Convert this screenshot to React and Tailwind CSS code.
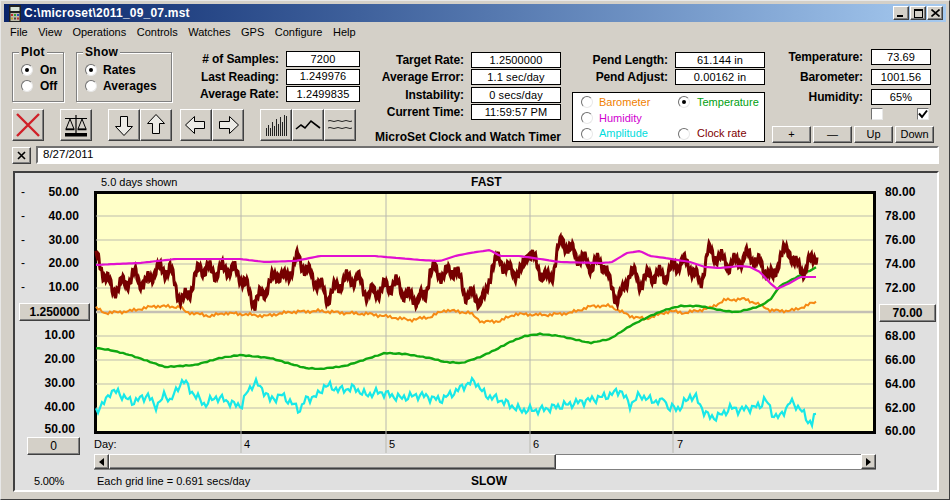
import React from "react";

const raised = "border border-t-white border-l-white border-r-[#404040] border-b-[#404040] shadow-[inset_-1px_-1px_0_#808080] bg-[#d4d0c8]";
const sunken = "border-2 border-t-[#707070] border-l-[#707070] border-r-white border-b-white";

const interp = (pts, x) => {
  for (let i = 1; i < pts.length; i++) {
    if (x <= pts[i][0]) {
      const [a, b] = pts[i - 1];
      const [c, d] = pts[i];
      return b + ((d - b) * (x - a)) / (c - a);
    }
  }
  return pts[pts.length - 1][1];
};

const series = (pts, fn, step = 1) => {
  const out = [];
  for (let x = 96; x <= 817; x += step) {
    out.push(`${x},${(interp(pts, x) + fn(x)).toFixed(1)}`);
  }
  return out.join(" ");
};

const brownPts = [[96,257],[105,275],[112,290],[125,283],[135,275],[145,285],[155,270],[170,270],[180,298],[183,302],[190,290],[200,267],[215,272],[228,268],[240,275],[255,303],[265,290],[278,272],[285,280],[298,258],[310,275],[320,285],[327,298],[343,280],[357,278],[368,295],[380,290],[395,283],[410,298],[425,298],[430,270],[445,275],[455,268],[465,293],[477,298],[485,300],[492,265],[500,260],[510,272],[522,272],[528,250],[540,270],[547,280],[552,275],[558,250],[563,240],[570,250],[580,258],[590,265],[600,262],[605,265],[610,285],[617,298],[622,295],[630,270],[640,283],[650,275],[665,275],[680,262],[690,265],[700,285],[708,252],[715,255],[730,265],[740,260],[750,255],[760,265],[768,272],[773,280],[780,255],[790,250],[795,265],[805,270],[815,255],[817,254]];
const orangePts = [[96,308],[105,313],[120,312],[130,311],[155,306],[180,307],[186,312],[210,316],[225,313],[240,314],[265,316],[290,312],[320,311],[345,313],[370,314],[410,320],[430,317],[445,310],[470,313],[482,322],[500,321],[515,314],[545,315],[570,313],[592,306],[610,306],[630,316],[645,319],[670,311],[685,313],[710,308],[725,300],[745,299],[760,305],[770,310],[780,311],[795,310],[810,304],[817,302]];
const magentaPts = [[96,265],[115,264],[140,263],[175,259],[205,259],[240,259],[265,262],[295,261],[320,256],[375,256],[420,260],[440,261],[455,256],[470,253],[490,250],[500,256],[520,256],[560,262],[600,263],[612,262],[627,253],[640,251],[650,256],[665,258],[690,262],[705,267],[720,268],[740,266],[750,267],[760,272],[770,283],[777,289],[790,283],[800,277],[817,277]];
const greenPts = [[96,348],[110,350],[130,355],[165,367],[195,365],[220,358],[240,355],[270,358],[305,368],[320,369],[345,366],[385,353],[405,354],[430,358],[445,362],[462,363],[480,357],[495,350],[510,342],[525,336],[540,334],[560,336],[590,343],[610,339],[630,326],[650,316],[665,310],[680,306],[700,306],[710,308],[725,311],[737,312],[750,309],[760,306],[770,300],[780,286],[797,277],[817,267]];
const cyanPts = [[96,410],[103,405],[110,392],[118,392],[125,398],[133,402],[142,398],[148,395],[155,407],[165,395],[170,400],[176,392],[183,379],[190,390],[200,400],[205,405],[215,397],[225,400],[235,405],[242,405],[247,392],[255,382],[265,392],[270,400],[282,395],[290,402],[300,410],[305,400],[318,395],[325,385],[340,390],[355,388],[365,395],[380,392],[400,398],[420,395],[440,400],[455,392],[465,385],[475,381],[485,395],[500,400],[520,410],[540,410],[565,405],[590,400],[610,395],[620,390],[630,405],[640,395],[650,400],[662,402],[664,397],[668,408],[680,408],[690,396],[696,398],[705,413],[710,417],[717,417],[725,412],[730,408],[740,410],[750,408],[760,406],[765,398],[773,415],[780,417],[790,402],[800,408],[807,420],[812,423],[814,416],[817,419]];

const Radio = ({ on }) => (
  <span className="w-[12px] h-[12px] rounded-full bg-white border border-t-[#707070] border-l-[#707070] border-r-[#e8e8e8] border-b-[#e8e8e8] flex items-center justify-center shrink-0">
    {on && <span className="w-[4px] h-[4px] rounded-full bg-black" />}
  </span>
);

const Val = ({ children, w = "w-[90px]" }) => (
  <div className={`${w} h-[16px] border border-black bg-white flex items-center justify-center text-[11px] tracking-[0.1px] leading-none`}>{children}</div>
);

const LabelRow = ({ label, value, h, labelW, boxW, gap = "gap-[7px]" }) => (
  <div className={`flex items-center justify-end ${gap} ${h}`}>
    <span className={`${labelW} text-right font-bold text-[12px] tracking-[-0.1px] whitespace-nowrap`}>{label}</span>
    <Val w={boxW}>{value}</Val>
  </div>
);

const Group = ({ title, w, children }) => (
  <div className={`relative ${w} h-[50px] border border-[#808080] shadow-[1px_1px_0_#fff,inset_1px_1px_0_#fff] pt-[9px] pl-[8px]`}>
    <span className="absolute -top-[8px] left-[6px] px-[2px] bg-[#d4d0c8] font-bold text-[12px] leading-[14px] tracking-[0.3px]">{title}</span>
    {children}
  </div>
);

const RadioLine = ({ on, children, gap = "gap-[6px]" }) => (
  <div className={`flex items-center ${gap} h-[16px] font-bold text-[12px]`}>
    <Radio on={on} />
    <span>{children}</span>
  </div>
);

const IconBtn = ({ children }) => (
  <div className={`w-[32px] h-[32px] ${raised} flex items-center justify-center`}>{children}</div>
);

const Arrow = ({ rot }) => (
  <svg width="24" height="24" viewBox="0 0 24 24" style={{ transform: `rotate(${rot}deg)` }}>
    <path d="M8.5 3.5h7v10h5l-8.500 9-8.500-9h5z" fill="#ecebe6" stroke="#000" strokeWidth="1" />
  </svg>
);

const TitleBtn = ({ children }) => (
  <div className={`w-[16px] h-[14px] ${raised} flex items-center justify-center`}>{children}</div>
);

const LeftNum = ({ dash, val, end }) => (
  <div className="h-[24px] flex items-center font-bold text-[12px] tracking-[0.1px]">
    <span className="w-[16px] text-center font-normal">{dash ? "-" : ""}</span>
    <span className={`${end} text-right`}>{val}</span>
  </div>
);

const AxisBtn = ({ w, ml, children }) => (
  <div className={`${w} ${ml} h-[18px] ${raised} flex items-center justify-center text-[12px] font-bold`}>{children}</div>
);

export default function App() {
  const gridY = [216, 240, 264, 288, 336, 360, 384, 408];
  const gridX = [241, 386, 530, 673];
  const brown = series(brownPts, (x) => 6 * Math.sin((x * 2 * Math.PI) / 12.5) + 4 * Math.sin((x * 2 * Math.PI) / 3.1), 0.5);
  const orange = series(orangePts, (x) => 1.1 * Math.sin(x * 1.3) + 0.7 * Math.sin(x * 0.37), 2);
  const magenta = series(magentaPts, () => 0, 3);
  const green = series(greenPts, (x) => 0.4 * Math.sin(x * 0.8), 3);
  const cyan = series(cyanPts, (x) => 3 * Math.sin(x * 1.1) + 2 * Math.sin(x * 0.53), 2);

  return (
    <div className="w-[950px] h-[500px] overflow-hidden bg-[#d4d0c8] text-black border border-t-[#e8e8e8] border-l-[#e8e8e8] border-r-[#404040] border-b-[#404040] px-[3px] pt-[3px] [font-family:'Liberation_Sans',Arial,sans-serif]">
      {/* Title bar */}
      <div className="h-[18px] flex items-center justify-between bg-gradient-to-r from-[#0a246a] to-[#a6caf0] pl-[5px] pr-[3px]">
        <div className="flex items-center gap-[3px]">
          <svg width="12" height="17" viewBox="0 0 12 17">
            <rect width="12" height="17" fill="#222" />
            <rect x="1.500" y="2" width="9" height="4" fill="#d8e4d8" />
            <rect x="1.500" y="8" width="9" height="8" fill="#bdb9a8" />
            <rect x="2" y="9" width="2" height="2" fill="#c03030" />
            <rect x="5" y="9" width="2" height="2" fill="#30a030" />
            <rect x="8" y="9" width="2" height="2" fill="#3050c0" />
            <rect x="2" y="12.500" width="2" height="2" fill="#c0a030" />
            <rect x="5" y="12.500" width="2" height="2" fill="#444" />
            <rect x="8" y="12.500" width="2" height="2" fill="#c03030" />
          </svg>
          <span className="text-white font-bold text-[12px] tracking-[0.22px] whitespace-nowrap">C:\microset\2011_09_07.mst</span>
        </div>
        <div className="flex items-center">
          <TitleBtn><span className="w-[6px] h-[2px] bg-black mt-[6px] -ml-[2px]" /></TitleBtn>
          <div className="ml-[1px]"><TitleBtn><span className="w-[9px] h-[9px] border border-black border-t-2" /></TitleBtn></div>
          <div className="ml-[1px]">
            <TitleBtn>
              <svg width="9" height="8" viewBox="0 0 9 8"><path d="M0.5 0.5L8.5 7.5M8.5 0.5L0.5 7.5" stroke="#000" strokeWidth="1.6" /></svg>
            </TitleBtn>
          </div>
        </div>
      </div>

      {/* Menu */}
      <div className="h-[20px] flex items-center gap-[10.5px] pl-[6px] text-[11px]">
        {["File", "View", "Operations", "Controls", "Watches", "GPS", "Configure", "Help"].map((m) => (
          <span key={m}>{m}</span>
        ))}
      </div>

      {/* Controls area */}
      <div className="h-[104px] flex items-start pl-[8px]">
        <div className="w-[348px] pt-[10px] shrink-0">
          <div className="h-[57px] flex items-start">
            <Group title="Plot" w="w-[52px]">
              <RadioLine on gap="gap-[7px]">On</RadioLine>
              <RadioLine gap="gap-[7px]">Off</RadioLine>
            </Group>
            <div className="ml-[12px]">
              <Group title="Show" w="w-[96px]">
                <RadioLine on>Rates</RadioLine>
                <RadioLine>Averages</RadioLine>
              </Group>
            </div>
            <div className="flex-1 flex flex-col items-end gap-[1px] -mt-[1px]">
              <LabelRow h="h-[16px]" label="# of Samples:" value="7200" labelW="w-[100px]" boxW="w-[74px]" />
              <LabelRow h="h-[17px]" label="Last Reading:" value="1.249976" labelW="w-[100px]" boxW="w-[74px]" />
              <LabelRow h="h-[16px]" label="Average Rate:" value="1.2499835" labelW="w-[100px]" boxW="w-[74px]" />
            </div>
          </div>
          <div className="flex items-start">
            <IconBtn>
              <svg width="26" height="26" viewBox="0 0 26 26"><path d="M2 2L24 24M24 2L2 24" stroke="#d02028" strokeWidth="2.4" /></svg>
            </IconBtn>
            <div className="ml-[16px]">
              <IconBtn>
                <svg width="26" height="26" viewBox="0 0 26 26">
                  <path d="M2 6.5H24M13 3V22" stroke="#000" strokeWidth="1.2" fill="none" />
                  <path d="M7 7L3 17H11ZM19 7L15 17H23Z" stroke="#000" strokeWidth="1" fill="none" />
                  <path d="M2.5 17.5H11.5M14.5 17.5H23.5" stroke="#000" strokeWidth="1.4" />
                  <rect x="2" y="21" width="22" height="3.5" fill="#000" />
                </svg>
              </IconBtn>
            </div>
            <div className="ml-[16px] flex">
              <IconBtn><Arrow rot={0} /></IconBtn>
              <IconBtn><Arrow rot={180} /></IconBtn>
            </div>
            <div className="ml-[8px] flex">
              <IconBtn><Arrow rot={90} /></IconBtn>
              <IconBtn><Arrow rot={-90} /></IconBtn>
            </div>
            <div className="ml-[16px] flex">
              <IconBtn>
                <svg width="26" height="24" viewBox="0 0 26 24" shapeRendering="crispEdges">
                  <path d="M3.500 15V23M5.500 12V23M7.500 15V23M9.500 9V23M11.500 13V23M13.500 6V23M15.500 11V23M17.500 4V23M19.500 9V23M21.500 2V23M23.500 3V23" stroke="#222" strokeWidth="1" />
                </svg>
              </IconBtn>
              <IconBtn>
                <svg width="26" height="14" viewBox="0 0 26 14"><path d="M1 11L6 7L10 10L16 3L25 10" stroke="#000" strokeWidth="1.6" fill="none" /></svg>
              </IconBtn>
              <IconBtn>
                <svg width="26" height="14" viewBox="0 0 26 14">
                  <path d="M1 3q2-1 4 0t4 0 4 0 4 0 4 0 4 0M1 10q2-1 4 0t4 0 4 0 4 0 4 0 4 0" stroke="#222" strokeWidth="1" fill="none" />
                </svg>
              </IconBtn>
            </div>
          </div>
        </div>

        <div className="ml-[14px] w-[187px] shrink-0 pt-[10px] flex flex-col">
          <div className="h-[17px]"><LabelRow h="h-[16px]" label="Target Rate:" value="1.2500000" labelW="w-[90px]" boxW="w-[90px]" /></div>
          <div className="h-[18px]"><LabelRow h="h-[16px]" label="Average Error:" value="1.1 sec/day" labelW="w-[90px]" boxW="w-[90px]" /></div>
          <div className="h-[17px]"><LabelRow h="h-[16px]" label="Instability:" value="0 secs/day" labelW="w-[90px]" boxW="w-[90px]" /></div>
          <div className="h-[16px]"><LabelRow h="h-[16px]" label="Current Time:" value="11:59:57 PM" labelW="w-[90px]" boxW="w-[90px]" /></div>
          <div className="mt-[8px] h-[16px] flex justify-end font-bold text-[12px] whitespace-nowrap">MicroSet Clock and Watch Timer</div>
        </div>

        <div className="ml-[11px] w-[193px] shrink-0 pt-[10px]">
          <div className="h-[17px]"><LabelRow h="h-[16px]" label="Pend Length:" value="61.144 in" labelW="w-[90px]" boxW="w-[90px]" /></div>
          <div className="h-[23px]"><LabelRow h="h-[16px]" label="Pend Adjust:" value="0.00162 in" labelW="w-[90px]" boxW="w-[90px]" /></div>
          <div className="h-[50px] bg-white border border-black grid grid-cols-[97px_1fr] grid-rows-[16px_16px_15px] pt-[1px] pl-[8px] items-center text-[11px]">
            <div className="flex items-center gap-[6px] text-[#f08000]"><Radio />Barometer</div>
            <div className="flex items-center gap-[7px] text-[#00a010]"><Radio on />Temperature</div>
            <div className="flex items-center gap-[6px] text-[#d000d0]"><Radio />Humidity</div>
            <div />
            <div className="flex items-center gap-[6px] text-[#00dcdc]"><Radio />Amplitude</div>
            <div className="flex items-center gap-[7px] text-[#800000]"><Radio />Clock rate</div>
          </div>
        </div>

        <div className="ml-[7px] w-[163px] shrink-0 pt-[7px]">
          <div className="flex flex-col items-end pr-[4px]">
            <div className="h-[20px]"><LabelRow h="h-[16px]" gap="gap-[8px]" label="Temperature:" value="73.69" labelW="w-[90px]" boxW="w-[60px]" /></div>
            <div className="h-[20px]"><LabelRow h="h-[16px]" gap="gap-[8px]" label="Barometer:" value="1001.56" labelW="w-[90px]" boxW="w-[60px]" /></div>
            <div className="h-[19px]"><LabelRow h="h-[16px]" gap="gap-[8px]" label="Humidity:" value="65%" labelW="w-[90px]" boxW="w-[60px]" /></div>
          </div>
          <div className="h-[18px] flex pl-[99px] gap-[34px]">
            <span className="w-[12px] h-[12px] bg-white border border-t-[#707070] border-l-[#707070] border-r-[#e8e8e8] border-b-[#e8e8e8]" />
            <span className="w-[12px] h-[12px] bg-white border border-t-[#707070] border-l-[#707070] border-r-[#e8e8e8] border-b-[#e8e8e8] flex items-center justify-center">
              <svg width="10" height="10" viewBox="0 0 10 10"><path d="M1 4.500L4 8L9 1.500" stroke="#000" strokeWidth="2" fill="none" /></svg>
            </span>
          </div>
          <div className="flex gap-[2px] text-[11px]">
            {["+", "—", "Up", "Down"].map((b) => (
              <div key={b} className={`w-[39px] h-[17px] ${raised} flex items-center justify-center`}>{b}</div>
            ))}
          </div>
        </div>
      </div>

      {/* Date row */}
      <div className="h-[25px] flex items-start pl-[8px] pr-[7px]">
        <div className={`w-[19px] h-[17px] mt-[1px] ${raised} flex items-center justify-center`}>
          <svg width="9" height="9" viewBox="0 0 9 9"><path d="M1 1L8 8M8 1L1 8" stroke="#000" strokeWidth="1.6" /></svg>
        </div>
        <div className={`ml-[5px] flex-1 h-[18px] bg-white ${sunken} flex items-center pl-[5px] text-[11.5px]`}>8/27/2011</div>
      </div>

      {/* Chart panel */}
      <div className="ml-[9px] mr-[7px] h-[321px] bg-[#e0e0e0] border-2 border-t-[#404040] border-l-[#404040] border-r-white border-b-white flex">
        <div className="w-[79px] shrink-0 flex flex-col pt-[7px]">
          <LeftNum dash val="50.00" end="w-[48px]" />
          <LeftNum dash val="40.00" end="w-[48px]" />
          <LeftNum dash val="30.00" end="w-[48px]" />
          <LeftNum dash val="20.00" end="w-[48px]" />
          <LeftNum dash val="10.00" end="w-[48px]" />
          <AxisBtn w="w-[71px]" ml="ml-[4px] mt-[4px] mb-[2px]">1.250000</AxisBtn>
          <LeftNum val="10.00" end="w-[44px]" />
          <LeftNum val="20.00" end="w-[44px]" />
          <LeftNum val="30.00" end="w-[44px]" />
          <LeftNum val="40.00" end="w-[44px]" />
          <div className="-mt-[1px]"><LeftNum val="50.00" end="w-[44px]" /></div>
          <div className="-mt-[4px]"><AxisBtn w="w-[53px]" ml="ml-[12px]"><span className="font-normal">0</span></AxisBtn></div>
          <div className="mt-[18px] ml-[19px] text-[11px] tracking-[-0.2px]">5.00%</div>
        </div>

        <div className="w-[782px] shrink-0 flex flex-col">
          <div className="h-[18px] flex items-center relative text-[11px]">
            <span className="ml-[7px]">5.0 days shown</span>
            <span className="absolute left-[377px] font-bold text-[12px]">FAST</span>
          </div>
          <div className="relative h-[243px] bg-[#ffffc8] border-[3px] border-black">
            <svg className="absolute -left-[3px] -top-[3px] overflow-visible" width="782" height="262" viewBox="94 191 782 262">
              {gridY.map((y) => (
                <line key={y} x1="96" x2="873" y1={y} y2={y} stroke="#bdbdad" strokeWidth="1" />
              ))}
              <line x1="96" x2="873" y1="312" y2="312" stroke="#c4c0b4" strokeWidth="2.4" />
              {gridX.map((x) => (
                <line key={x} x1={x} x2={x} y1="194" y2="453" stroke="#b8b8b0" strokeWidth="1" />
              ))}
              <polyline points={orange} fill="none" stroke="#f58a14" strokeWidth="2" />
              <polyline points={green} fill="none" stroke="#10a810" strokeWidth="2.4" />
              <polyline points={cyan} fill="none" stroke="#18e8e8" strokeWidth="2.2" />
              <polyline points={brown} fill="none" stroke="#760000" strokeWidth="3" />
              <polyline points={magenta} fill="none" stroke="#e010d0" strokeWidth="2.2" />
            </svg>
          </div>
          <div className="h-[20px] flex items-center text-[11px] relative">
            <span>Day:</span>
            <span className="absolute left-[150px]">4</span>
            <span className="absolute left-[295px]">5</span>
            <span className="absolute left-[439px]">6</span>
            <span className="absolute left-[583px]">7</span>
          </div>
          <div className="h-[16px] flex bg-white border-b border-[#808080]">
            <div className={`w-[15px] ${raised} flex items-center justify-center`}>
              <svg width="5" height="8" viewBox="0 0 5 8"><path d="M5 0V8L0 4Z" fill="#000" /></svg>
            </div>
            <div className={`w-[447px] ${raised}`} />
            <div className="flex-1 bg-white border-t border-[#808080]" />
            <div className={`w-[15px] ${raised} flex items-center justify-center`}>
              <svg width="5" height="8" viewBox="0 0 5 8"><path d="M0 0V8L5 4Z" fill="#000" /></svg>
            </div>
          </div>
          <div className="flex-1 flex items-center relative text-[11px] pt-[2px]">
            <span className="ml-[3px]">Each grid line = 0.691 secs/day</span>
            <span className="absolute left-[377px] font-bold text-[12px]">SLOW</span>
          </div>
        </div>

        <div className="flex-1 flex flex-col pt-[7px] pl-[9px]">
          {["80.00", "78.00", "76.00", "74.00", "72.00"].map((v) => (
            <div key={v} className="h-[24px] flex items-center font-bold text-[12px] tracking-[0.1px]">{v}</div>
          ))}
          <div className="-ml-[6px] mt-[4px] mb-[2px]"><AxisBtn w="w-[57px]" ml="">70.00</AxisBtn></div>
          {["68.00", "66.00", "64.00", "62.00"].map((v) => (
            <div key={v} className="h-[24px] flex items-center font-bold text-[12px] tracking-[0.1px]">{v}</div>
          ))}
          <div className="-mt-[1px] h-[24px] flex items-center font-bold text-[12px] tracking-[0.1px]">60.00</div>
        </div>
      </div>
    </div>
  );
}
